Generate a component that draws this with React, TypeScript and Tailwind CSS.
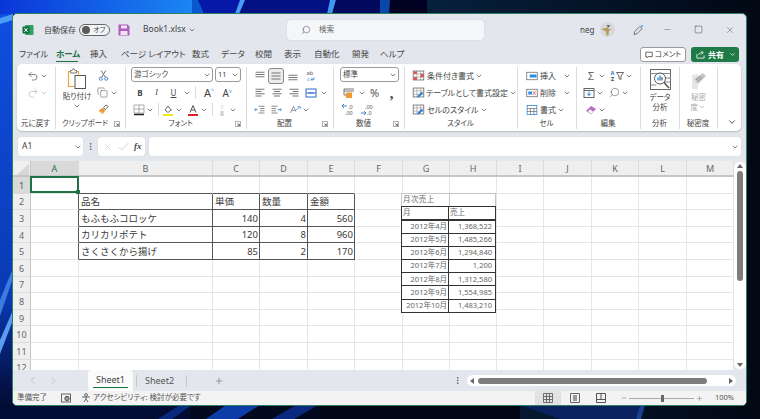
import type { ReactNode } from 'react';
import { ChevronDown, ChevronLeft, ChevronRight, Copy, Minus, MoreVertical, Plus, Redo2, Search, Square, Undo2, X } from 'lucide-react';

function S({ w = 12, h = 12, vb = '0 0 16 16', children }: { w?: number; h?: number; vb?: string; children: ReactNode }) {
  return (
    <svg width={w} height={h} viewBox={vb} fill="none" className="shrink-0">
      {children}
    </svg>
  );
}

function Chev({ grey = false }: { grey?: boolean }) {
  return (
    <span className={`flex w-[10px] shrink-0 justify-center ${grey ? 'text-[#b5b5b5]' : 'text-[#555]'}`}>
      <ChevronDown size={8} strokeWidth={2.2} />
    </span>
  );
}

// horizontal lines icon, used by the alignment buttons
function Lines({ rows, color = '#666' }: { rows: number[][]; color?: string }) {
  return (
    <S>
      {rows.map(([x1, x2, y]) => (
        <path key={`${x1}-${y}`} d={`M${x1} ${y}H${x2}`} stroke={color} strokeWidth="1.2" />
      ))}
    </S>
  );
}

function GridIcon({ children }: { children?: ReactNode }) {
  return (
    <S w={13} h={13}>
      <rect x="1.5" y="2.5" width="13" height="11" fill="#fff" stroke="#666" />
      <path d="M1.5 6h13M1.5 10h13M6 2.5v11M10.5 2.5v11" stroke="#999" strokeWidth=".8" />
      {children}
    </S>
  );
}

function Launcher() {
  return (
    <span className="w-[10px] shrink-0">
      <S w={6} h={6} vb="0 0 8 8">
        <path d="M.5 7.5V.5h7v7z" stroke="#888" />
        <path d="M3 3l3 3M6 3.5V6H3.5" stroke="#555" />
      </S>
    </span>
  );
}

function Group({ width, label, launcher = false, last = false, children }: { width: string; label: string; launcher?: boolean; last?: boolean; children: ReactNode }) {
  return (
    <div className={`flex h-[62px] shrink-0 flex-col ${last ? '' : 'border-r border-[#dcdcdc]'} ${width}`}>
      <div className="h-[52px]">{children}</div>
      <div className="flex h-[10px] items-center pr-[1px]">
        <span className="flex-1 whitespace-nowrap text-center text-[7.5px] leading-none text-[#444]">{label}</span>
        {launcher && <Launcher />}
      </div>
    </div>
  );
}

function Row({ className = '', children }: { className?: string; children: ReactNode }) {
  return <div className={`flex h-[17px] items-center ${className}`}>{children}</div>;
}

function Select({ width, label }: { width: string; label: string }) {
  return (
    <div className={`flex h-[15px] items-center justify-between rounded-[3px] border border-[#9a9a9a] bg-white pl-[2px] text-[7.5px] text-[#444] ${width}`}>
      {label}
      <Chev />
    </div>
  );
}

function Divider() {
  return <span className="mx-[3px] h-[13px] w-px shrink-0 bg-[#dcdcdc]" />;
}

const tabs = [
  { label: 'ファイル', cls: 'w-[37px]' },
  { label: 'ホーム', cls: 'w-[34px]' },
  { label: '挿入', cls: 'w-[31px]' },
  { label: 'ページ レイアウト', cls: 'w-[71px]' },
  { label: '数式', cls: 'w-[29px]' },
  { label: 'データ', cls: 'w-[34px]' },
  { label: '校閲', cls: 'w-[29px]' },
  { label: '表示', cls: 'w-[30px]' },
  { label: '自動化', cls: 'w-[38px]' },
  { label: '開発', cls: 'w-[28px]' },
  { label: 'ヘルプ', cls: 'w-[30px]' },
];

const colNames = ['A', 'B', 'C', 'D', 'E', 'F', 'G', 'H', 'I', 'J', 'K', 'L', 'M'];

const cells: Record<string, string> = {
  B2: '品名', C2: '単価', D2: '数量', E2: '金額',
  B3: 'もふもふコロッケ', C3: '140', D3: '4', E3: '560',
  B4: 'カリカリポテト', C4: '120', D4: '8', E4: '960',
  B5: 'さくさくから揚げ', C5: '85', D5: '2', E5: '170',
};

const monthly = [
  ['2012年4月', '1,368,522'],
  ['2012年5月', '1,485,266'],
  ['2012年6月', '1,294,840'],
  ['2012年7月', '1,200'],
  ['2012年8月', '1,312,580'],
  ['2012年9月', '1,554,985'],
  ['2012年10月', '1,483,210'],
];

const sheetGrid = 'grid grid-cols-[18px_48px_134px_47px_48px_47px_48px_47px_47px_47px_48px_47px_48px_47px]';

function Cell({ col, row }: { col: string; row: number }) {
  const value = cells[`${col}${row}`];
  const inTable = row >= 2 && row <= 5;
  const darkRight = inTable && ['A', 'B', 'C', 'D', 'E'].includes(col);
  const darkBottom = row <= 5 && ['B', 'C', 'D', 'E'].includes(col);
  const numeric = value !== undefined && /^\d+$/.test(value);
  return (
    <div
      className={`relative flex items-center overflow-visible whitespace-nowrap border-b border-r pt-[1px] text-[9.5px] leading-none text-[#3a3a3a] [font-feature-settings:normal] ${
        darkRight ? 'border-r-[#555]' : 'border-r-[#e6e6e6]'
      } ${darkBottom ? 'border-b-[#555]' : 'border-b-[#e6e6e6]'} ${numeric ? 'justify-end pr-[1px]' : 'pl-[2px]'}`}
    >
      {value}
      {col === 'A' && row === 1 && (
        <span className="absolute -left-px -top-px h-[17px] w-[49px] border-2 border-[#1f7246]">
          <span className="absolute -bottom-[3px] -right-[3px] h-[4px] w-[4px] bg-[#1f7246]" />
        </span>
      )}
    </div>
  );
}

function Wallpaper() {
  return (
    <svg className="absolute inset-0" width="760" height="419" viewBox="0 0 760 419">
      <defs>
        <linearGradient id="top" x1="0" x2="1" y1="0" y2="0">
          <stop offset="0" stopColor="#0a36d8" />
          <stop offset="1" stopColor="#1b86f2" />
        </linearGradient>
        <linearGradient id="right" x1="0" x2="1" y1="0" y2="0">
          <stop offset="0" stopColor="#06203c" />
          <stop offset="1" stopColor="#020814" />
        </linearGradient>
        <linearGradient id="side" x1="0" x2="0" y1="0" y2="1">
          <stop offset="0" stopColor="#0f4fe0" />
          <stop offset=".7" stopColor="#0a3ab4" />
          <stop offset=".9" stopColor="#041450" />
          <stop offset="1" stopColor="#020a28" />
        </linearGradient>
      </defs>
      <rect width="760" height="419" fill="#030a20" />
      <rect x="427" width="333" height="419" fill="url(#right)" />
      <rect width="192" height="14" fill="url(#top)" />
      <path d="M192 0h8l4 14h-12z" fill="#0a58d0" />
      <path d="M198 0h44l-5 14h-33z" fill="#0518a8" />
      <path d="M242 0h90l-4 14h-90z" fill="#021182" />
      <path d="M240 0h5l-6 14h-4z" fill="#4a9cf4" />
      <path d="M330 0h6l-4 14h-5z" fill="#3f96f0" />
      <path d="M336 0h46l-1 14h-48z" fill="#00095c" />
      <path d="M380 0h10l-1 14h-9z" fill="#0b46aa" />
      <path d="M390 0h37v14h-37z" fill="#000020" />
      <rect y="14" width="13" height="405" fill="url(#side)" />
      <path d="M0 18L13 14v6L0 24z" fill="#4a9cf4" />
      <path d="M0 300L13 268v10L0 316z" fill="#3a7ce0" />
      <path d="M0 340L13 310v10L0 354z" fill="#5a9cf0" />
      <path d="M0 405h190v14H0z" fill="#020c34" />
      <path d="M180 405h12l-20 14h-14z" fill="#0a2a80" />
      <path d="M226 405h34l-22 14h-32z" fill="#0c3ca8" />
      <path d="M296 405h22l-24 14h-22z" fill="#0a2a80" />
      <path d="M320 405h200v14H320z" fill="#010514" />
      <path d="M520 405h120l-4 14H560z" fill="#0a2360" />
      <path d="M640 405h5l-4 14h-5z" fill="#18408c" />
    </svg>
  );
}

export default function App() {
  return (
    <div className="relative h-[419px] w-[760px] overflow-hidden font-['Noto_Sans','Noto_Sans_CJK_JP',sans-serif] text-[#444] [font-feature-settings:'palt']">
      <Wallpaper />
      <div className="absolute left-[12px] top-[13px] flex h-[393px] w-[735px] flex-col overflow-hidden rounded-[5px] border border-[#2c7f60] bg-[#e3e6ec]">
        {/* title bar */}
        <div className="flex h-[31px] shrink-0 items-center text-[8px]">
          <span className="ml-[9px]">
            <S vb="0 0 12 12">
              <rect x="3" y="1" width="8.5" height="10" rx="1" fill="#33a060" />
              <rect x=".5" y="2.5" width="7" height="7" rx=".8" fill="#107040" />
              <path d="M2.4 4.2l3.2 3.6M5.6 4.2L2.4 7.8" stroke="#fff" strokeWidth="1" />
            </S>
          </span>
          <span className="ml-[10px] w-[32px] whitespace-nowrap">自動保存</span>
          <span className="ml-[3px] flex h-[12px] w-[31px] items-center rounded-full border border-[#666] bg-[#f3f4f7] pl-[2px]">
            <span className="h-[8px] w-[8px] rounded-full bg-[#5a5a5a]" />
            <span className="ml-[3px] text-[7px] leading-none">オフ</span>
          </span>
          <span className="ml-[8px]">
            <S vb="0 0 12 12">
              <path d="M.5.5h9l2 2v9H.5z" fill="#b25cbd" />
              <rect x="3" y="1.5" width="6" height="3" fill="#efe3f2" />
              <rect x="2.5" y="7" width="7" height="4" fill="#efe3f2" />
            </S>
          </span>
          <span className="ml-[13px] w-[42px] whitespace-nowrap text-[8.5px]">Book1.xlsx</span>
          <span className="ml-[2px]">
            <Chev />
          </span>
          <div className="ml-[90px] flex h-[20px] w-[197px] items-center rounded-[3px] bg-[#f5f6f9] pl-[14px] shadow-[0_0_1px_#aaa]">
            <Search size={10} strokeWidth={1.3} className="-scale-x-100 text-[#555]" />
            <span className="ml-[8px] text-[7.5px] text-[#666]">検索</span>
          </div>
          <span className="ml-[96px] w-[14px] text-[8px]">neg</span>
          <span className="ml-[6px]">
            <S w={15} h={15} vb="0 0 15 15">
              <circle cx="7.5" cy="7.5" r="7.5" fill="#d8d9dc" />
              <path d="M1 7l5-1 2-1 1 2 3 .5-3 1-.5 5h-2l-.5-4z" fill="#b59a5c" />
              <path d="M6 3.5h4.5l-2 1.500z" fill="#2a2a2a" />
            </S>
          </span>
          <span className="ml-[17px]">
            <S vb="0 0 12 12">
              <path d="M2 10.500l.8-3 5-5 2.300 2.200-5 5z" stroke="#666" strokeWidth=".9" />
              <path d="M10 1v2M9 2h2" stroke="#3a8fd8" strokeWidth=".8" />
            </S>
          </span>
          <span className="ml-[19px]">
            <Minus size={9} strokeWidth={1} className="text-[#333]" />
          </span>
          <span className="ml-[22px]">
            <Square size={9} strokeWidth={1.2} className="text-[#333]" />
          </span>
          <span className="ml-[22px]">
            <X size={10} strokeWidth={1} className="text-[#333]" />
          </span>
        </div>

        {/* tabs */}
        <div className="flex h-[19px] shrink-0 items-center pl-[6px] pr-[7px] text-[8.5px] text-[#444]">
          {tabs.map((t) => (
            <span key={t.label} className={`relative flex h-[19px] items-center whitespace-nowrap ${t.cls} ${t.label === 'ホーム' ? 'font-bold text-[#1e6f45]' : ''}`}>
              {t.label}
              {t.label === 'ホーム' && <span className="absolute bottom-[2px] left-0 h-[1.5px] w-[22px] bg-[#1f7246]" />}
            </span>
          ))}
          <div className="ml-auto flex items-center gap-[5px]">
            <div className="flex h-[15px] w-[46px] items-center justify-center gap-[2px] rounded-[3px] border border-[#9a9a9a] bg-white text-[7.5px]">
              <S w={8} h={8} vb="0 0 10 10">
                <path d="M1 1.500h8v5.500H4L2.500 8.500V7H1z" stroke="#444" />
              </S>
              コメント
            </div>
            <div className="flex h-[15px] w-[48px] items-center rounded-[3px] bg-[#1e7b45] pl-[5px] text-[8px] text-white">
              <S w={9} h={9} vb="0 0 10 10">
                <path d="M1 4.500V9h8V6M3 5.500C3.500 3.500 5 3 7.500 3M6 1l2 2-2 2" stroke="#fff" strokeWidth=".9" />
              </S>
              <span className="ml-[3px] font-bold">共有</span>
              <span className="ml-[5px] text-white">
                <ChevronDown size={7} strokeWidth={2.5} />
              </span>
            </div>
          </div>
        </div>

        {/* ribbon */}
        <div className="ml-[4px] flex h-[67px] w-[724px] shrink-0 items-start rounded-[5px] bg-white pt-[3px] shadow-[0_1px_2px_#bbb]">
          <Group width="w-[39px]" label="元に戻す">
            <Row className="pl-[10px]">
              <Undo2 size={12} strokeWidth={1.4} className="text-[#555]" />
              <Chev />
            </Row>
            <Row className="pl-[10px]">
              <Redo2 size={12} strokeWidth={1.4} className="text-[#bbb]" />
              <Chev grey />
            </Row>
          </Group>

          <Group width="w-[70px]" label="クリップボード" launcher>
            <div className="flex">
              <div className="flex w-[40px] flex-col items-center pl-[2px] pt-[1px]">
                <S w={21} h={21} vb="0 0 21 21">
                  <path d="M3 3.500H1.500v15h6M10 3.500h1.500v3" stroke="#e8a33d" strokeWidth="1.200" />
                  <path d="M3.500 4V2.500H5L6 .8h1L8 2.500h1.500V5h-6z" stroke="#777" fill="#fff" />
                  <rect x="8" y="7.500" width="10.500" height="13" fill="#fff" stroke="#555" />
                </S>
                <span className="mt-[2px] whitespace-nowrap text-[7.5px] leading-[11px]">貼り付け</span>
                <Chev />
              </div>
              <div className="w-[29px] pl-[1px]">
                <Row className="pl-[1px]">
                  <S w={11} h={11} vb="0 0 12 12">
                    <path d="M3.500.5L8 8M8.500.5L4 8" stroke="#666" />
                    <circle cx="3" cy="9.500" r="1.700" stroke="#3a78c4" />
                    <circle cx="9" cy="9.500" r="1.700" stroke="#3a78c4" />
                  </S>
                </Row>
                <Row>
                  <Copy size={11} strokeWidth={1.2} className="text-[#555]" />
                  <span className="ml-[1px]">
                    <Chev />
                  </span>
                </Row>
                <Row className="pl-[1px]">
                  <S w={11} h={11} vb="0 0 12 12">
                    <path d="M1 7l4-3 3 3-3 4-1-.5L5 8l-2 2-.5-.5L3.500 8 2 9z" fill="#ee9a30" />
                    <path d="M6 4l3-3 2 2-3 3z" stroke="#555" fill="#fff" />
                  </S>
                </Row>
              </div>
            </div>
          </Group>

          <Group width="w-[121px]" label="フォント" launcher>
            <div className="flex h-[17px] items-start pl-[5px]">
              <Select width="w-[82px]" label="游ゴシック" />
              <span className="ml-[2px]">
                <Select width="w-[26px]" label="11" />
              </span>
            </div>
            <Row className="pl-[6px] text-[8px] leading-none">
              <span className="w-[16px] text-center font-bold">B</span>
              <span className="w-[17px] text-center font-['Liberation_Serif',serif] italic">I</span>
              <span className="w-[17px] text-center underline">U</span>
              <Chev />
              <Divider />
              <span className="ml-[1px] w-[18px] text-center text-[11px]">
                A<span className="align-super text-[5px] text-[#3a8fd8]">^</span>
              </span>
              <span className="w-[18px] text-center text-[10px]">
                A<span className="align-super text-[5px] text-[#3a8fd8]">v</span>
              </span>
            </Row>
            <Row className="pl-[7px]">
              <S vb="0 0 12 12">
                <path d="M1 1h10v8H1zM6 1v8M1 5h10" stroke="#999" strokeWidth=".8" />
                <path d="M1 10.500h10" stroke="#222" strokeWidth="1.400" />
              </S>
              <Chev />
              <Divider />
              <S vb="0 0 12 12">
                <path d="M3 6l3-4 3 4-3 2.500z" stroke="#666" />
                <path d="M9 5v2" stroke="#3a8fd8" />
                <path d="M1 11h10" stroke="#f5e616" strokeWidth="2" />
              </S>
              <Chev />
              <span className="ml-[3px]" />
              <S vb="0 0 12 12">
                <path d="M3 8.500L6 1.500l3 7M4 6h4" stroke="#555" />
                <path d="M1 11h10" stroke="#e0202c" strokeWidth="2" />
              </S>
              <Chev />
              <Divider />
              <S w={12} h={12} vb="0 0 12 12">
                <text x="6" y="5" fontSize="5" textAnchor="middle" fill="#aaa">ｱ</text>
                <text x="6" y="11" fontSize="5" textAnchor="middle" fill="#aaa">亜</text>
              </S>
              <Chev />
            </Row>
          </Group>

          <Group width="w-[87px]" label="配置" launcher>
            <Row className="pl-[7px]">
              <Lines rows={[[2, 14, 3], [2, 14, 6], [2, 14, 9]]} />
              <span className="ml-[2px] flex h-[16px] w-[16px] items-center justify-center rounded-[3px] border border-[#8a8a8a] bg-[#ececec]">
                <Lines rows={[[2, 14, 4], [2, 14, 8], [2, 14, 12]]} />
              </span>
              <span className="ml-[3px]">
                <Lines rows={[[2, 14, 7], [2, 14, 10], [2, 14, 13]]} />
              </span>
              <span className="ml-[5px]">
                <S w={12} h={12} vb="0 0 12 12">
                  <text x="6" y="5" fontSize="6" textAnchor="middle" fill="#666">ab</text>
                  <text x="3" y="11" fontSize="6" fill="#3a8fd8">c</text>
                  <path d="M10 7v2.500H7M8.500 8L7 9.500 8.500 11" stroke="#3a8fd8" strokeWidth=".8" />
                </S>
              </span>
            </Row>
            <Row className="pl-[7px]">
              <Lines rows={[[2, 14, 3], [2, 10, 6], [2, 14, 9], [2, 10, 12]]} />
              <span className="ml-[5px]">
                <Lines rows={[[2, 14, 3], [4, 12, 6], [2, 14, 9], [4, 12, 12]]} />
              </span>
              <span className="ml-[5px]">
                <Lines rows={[[2, 14, 3], [6, 14, 6], [2, 14, 9], [6, 14, 12]]} />
              </span>
              <span className="ml-[5px]">
                <S vb="0 0 12 12">
                  <rect x="1" y="2" width="10" height="8" stroke="#2a6fc4" />
                  <path d="M1 6h10M3.500 6h5" stroke="#2a6fc4" />
                </S>
              </span>
              <span className="ml-[2px]">
                <Chev />
              </span>
            </Row>
            <Row className="pl-[7px]">
              <S>
                <path d="M6 3h8M8 6h6M8 9h6M6 12h8" stroke="#666" />
                <path d="M5 7.500H1M3 5.500l-2 2 2 2" stroke="#2a7fd0" />
              </S>
              <span className="ml-[4px]">
                <S>
                  <path d="M2 3h8M2 6h6M2 9h6M2 12h8" stroke="#666" />
                  <path d="M10 7.500h5M13 5.500l2 2-2 2" stroke="#2a7fd0" />
                </S>
              </span>
              <span className="ml-[7px]">
                <S>
                  <path d="M2 12L6 3l3 7M3.500 8.500h4" stroke="#777" />
                  <path d="M8 9l6-5M11.500 3.500H15v3" stroke="#3a8fd8" />
                </S>
              </span>
              <Chev />
            </Row>
          </Group>

          <Group width="w-[71px]" label="数値" launcher>
            <div className="flex h-[17px] items-start pl-[6px]">
              <Select width="w-[59px]" label="標準" />
            </div>
            <Row className="pl-[9px]">
              <S vb="0 0 12 12">
                <path d="M1 2h10M1 4h10" stroke="#777" />
                <rect x="3" y="5.500" width="6" height="5.500" fill="#ee9a30" />
                <path d="M1 2v6h2" stroke="#777" />
              </S>
              <span className="ml-[2px]">
                <Chev />
              </span>
              <span className="w-[15px] text-center text-[11px] leading-none text-[#555]">%</span>
              <span className="ml-[3px] w-[13px] text-center font-['Liberation_Serif',serif] text-[15px] font-bold leading-[10px] text-[#444]">,</span>
            </Row>
            <Row className="pl-[7px]">
              <S w={14} h={13} vb="0 0 14 13">
                <path d="M6 3H1M3 1L1 3l2 2" stroke="#2a7fd0" strokeWidth=".9" />
                <text x="7" y="5.500" fontSize="5.500" fill="#555">.0</text>
                <text x="4" y="12" fontSize="5.500" fill="#555">.00</text>
              </S>
              <span className="ml-[5px]">
                <S w={14} h={13} vb="0 0 14 13">
                  <text x="5" y="5.500" fontSize="5.500" fill="#555">.00</text>
                  <path d="M1 10h5M4 8l2 2-2 2" stroke="#2a7fd0" strokeWidth=".9" />
                  <text x="7" y="12" fontSize="5.500" fill="#555">.0</text>
                </S>
              </span>
            </Row>
          </Group>

          <Group width="w-[113px]" label="スタイル">
            <Row className="whitespace-nowrap pl-[7px] text-[8px]">
              <GridIcon>
                <rect x="2" y="3" width="4" height="3" fill="#e05050" />
                <rect x="10.500" y="6" width="4" height="4" fill="#e05050" />
                <rect x="2" y="10" width="4" height="3.500" fill="#e05050" />
              </GridIcon>
              <span className="ml-[2px]">条件付き書式</span>
              <Chev />
            </Row>
            <Row className="whitespace-nowrap pl-[7px] text-[8px]">
              <GridIcon>
                <path d="M6 13l6-6 2 2-6 5z" fill="#2a7fd0" />
              </GridIcon>
              <span className="ml-[1px]">テーブルとして書式設定</span>
              <Chev />
            </Row>
            <Row className="whitespace-nowrap pl-[7px] text-[8px]">
              <GridIcon>
                <path d="M6 13l6-6 2 2-6 5z" fill="#2a7fd0" />
              </GridIcon>
              <span className="ml-[2px]">セルのスタイル</span>
              <Chev />
            </Row>
          </Group>

          <Group width="w-[59px]" label="セル">
            <Row className="pl-[8px] text-[8px]">
              <S w={12} h={12}>
                <rect x="1" y="3" width="14" height="10" stroke="#666" />
                <rect x="5" y="6" width="9" height="4" fill="#2a8fe0" />
              </S>
              <span className="ml-[2px] w-[22px]">挿入</span>
              <Chev />
            </Row>
            <Row className="pl-[8px] text-[8px]">
              <S w={12} h={12}>
                <rect x="1" y="3" width="14" height="10" stroke="#666" />
                <rect x="3" y="6" width="5" height="4" fill="#2a8fe0" />
                <path d="M9 5.500l4 5M13 5.500l-4 5" stroke="#e04040" />
              </S>
              <span className="ml-[2px] w-[22px]">削除</span>
              <Chev />
            </Row>
            <Row className="pl-[8px] text-[8px]">
              <S w={12} h={12}>
                <rect x="1.500" y="2" width="13" height="12" stroke="#2a7fd0" />
                <path d="M1.500 6h13M1.500 10h13M6 6v8M10.500 6v8" stroke="#555" strokeWidth=".8" />
              </S>
              <span className="ml-[2px]">書式</span>
              <Chev />
            </Row>
          </Group>

          <Group width="w-[64px]" label="編集">
            <Row className="pl-[9px]">
              <span className="w-[10px] text-center text-[11px] leading-none text-[#666]">Σ</span>
              <span className="ml-[1px]">
                <Chev />
              </span>
              <span className="ml-[2px]">
                <S w={7} h={12} vb="0 0 7 12">
                  <text x="3.500" y="5" fontSize="5.500" fontWeight="700" textAnchor="middle" fill="#2a7fd0">A</text>
                  <text x="3.500" y="11" fontSize="5.500" fontWeight="700" textAnchor="middle" fill="#444">Z</text>
                </S>
              </span>
              <S w={8} h={10} vb="0 0 8 10">
                <path d="M.5 1.500h7L5 5v3.500L3 7.500V5z" stroke="#666" />
              </S>
              <Chev />
            </Row>
            <Row className="pl-[6px]">
              <S vb="0 0 12 12">
                <rect x="1" y="1.500" width="10" height="9" stroke="#666" />
                <path d="M1 3.500h10" stroke="#666" />
                <path d="M6 4.500v4M4 6.500l2 2 2-2" stroke="#2a7fd0" />
              </S>
              <Chev />
              <span className="ml-[4px]">
                <Search size={11} strokeWidth={1.2} className="-scale-x-100 text-[#555]" />
              </span>
              <Chev />
            </Row>
            <Row className="pl-[8px]">
              <S vb="0 0 12 12">
                <path d="M1 7l5-5 5 3-5 5z" fill="#b86cc4" />
                <path d="M3 7.500l2-2 3 2-2 2z" fill="#fff" />
              </S>
              <Chev />
            </Row>
          </Group>

          <Group width="w-[39px]" label="分析">
            <div className="flex flex-col items-center pt-[2px]">
              <S w={21} h={21} vb="0 0 21 21">
                <rect x=".5" y=".5" width="20" height="20" fill="#fff" stroke="#666" />
                <path d="M.5 4.500h20M.5 16h6M14 9h6.500M14 13h6.500" stroke="#888" />
                <circle cx="10" cy="9.500" r="5.500" stroke="#555" fill="#fff" />
                <path d="M14 13.500l5 5.500" stroke="#555" strokeWidth="1.500" />
                <path d="M8 8.500v3M10 6.500v5" stroke="#2a8fe0" strokeWidth="1.400" />
                <path d="M12 8v3.500" stroke="#555" strokeWidth="1.200" />
              </S>
              <span className="mt-[2px] whitespace-nowrap text-[7.5px] leading-[10px]">データ</span>
              <span className="whitespace-nowrap text-[7.5px] leading-[10px]">分析</span>
            </div>
          </Group>

          <Group width="w-[38px]" label="秘密度">
            <div className="flex flex-col items-center pt-[3px] text-[#aaa]">
              <S w={20} h={20} vb="0 0 20 20">
                <path d="M3 5l6-1v15H3z" fill="#e6e6e6" />
                <path d="M5 9l9-6 3 3-8 8z" fill="#c8c8c8" />
                <path d="M7 10l5-4M8.500 11.500l5-4" stroke="#8a8a8a" />
              </S>
              <span className="mt-[2px] whitespace-nowrap text-[7.5px] leading-[10px]">秘密</span>
              <span className="flex items-center whitespace-nowrap text-[7.5px] leading-[10px]">
                度
                <span className="-ml-[1px]">
                  <Chev grey />
                </span>
              </span>
            </div>
          </Group>

          <div className="flex h-[60px] flex-1 items-end justify-end pr-[4px]">
            <ChevronDown size={10} strokeWidth={2} className="text-[#333]" />
          </div>
        </div>

        {/* formula bar */}
        <div className="mt-[6px] flex h-[19px] shrink-0 items-center">
          <div className="ml-[5px] flex h-[19px] w-[65px] items-center justify-between rounded-[3px] bg-white pl-[4px] text-[8.5px] shadow-[0_0_1px_#bbb]">
            A1
            <Chev />
          </div>
          <span className="ml-[2px] flex w-[10px] justify-center text-[#555]">
            <MoreVertical size={9} strokeWidth={2} />
          </span>
          <div className="ml-[3px] flex h-[19px] w-[47px] items-center gap-[5px] rounded-[3px] bg-white pl-[4px] shadow-[0_0_1px_#bbb]">
            <X size={11} strokeWidth={1} className="text-[#bbb]" />
            <S w={11} h={11}>
              <path d="M1 9l4 4 10-10" stroke="#bbb" />
            </S>
            <span className="font-['Liberation_Serif',serif] text-[9px] font-bold italic text-[#444]">fx</span>
          </div>
          <div className="ml-[4px] flex h-[19px] w-[592px] items-center justify-end rounded-[3px] bg-white pr-[1px] shadow-[0_0_1px_#bbb]">
            <Chev />
          </div>
        </div>

        {/* sheet */}
        <div className="mt-[5px] flex h-[209px] shrink-0 overflow-hidden">
          <div className="relative w-[721px] shrink-0 overflow-hidden bg-white">
            <div className={`${sheetGrid} h-[16px] border-b-2 border-[#c6c6c6] bg-[#efefef] text-[9px] leading-none text-[#666]`}>
              <div className="border-r border-[#c6c6c6]">
                <div className="ml-auto mr-[1px] mt-[3px] h-[11px] w-[12px] bg-[#d6d6d6] [clip-path:polygon(100%_0,100%_100%,0_100%)]" />
              </div>
              {colNames.map((c) => (
                <div key={c} className={`flex items-center justify-center border-r border-[#dcdcdc] ${c === 'A' ? 'bg-[#d9d9d9] text-[#1f7246]' : ''}`}>
                  {c}
                </div>
              ))}
            </div>
            {[1, 2, 3, 4, 5, 6, 7, 8, 9, 10, 11, 12].map((row) => (
              <div key={row} className={`${sheetGrid} h-[16.6px]`}>
                <div className={`flex items-center justify-center border-b border-r border-b-[#dcdcdc] border-r-[#c6c6c6] pt-[1px] text-[9px] leading-none ${row === 1 ? 'bg-[#d9d9d9] text-[#1f7246]' : 'bg-[#efefef] text-[#666]'}`}>
                  {row}
                </div>
                {colNames.map((c) => (
                  <Cell key={c} col={c} row={row} />
                ))}
              </div>
            ))}

            {/* pasted picture of the monthly table */}
            <div className="absolute left-[388px] top-[32px] w-[95px] bg-white text-[7.5px] leading-none text-[#666] [font-feature-settings:normal]">
              <div className="grid h-[13px] grid-cols-[48px_47px] border-l border-r border-t border-[#c4c4c4]">
                <div className="flex items-center border-r border-[#c4c4c4] pl-[1px] tracking-[0.4px]">月次売上</div>
              </div>
              <div className="border-l border-t border-[#333]">
                <div className="grid h-[13.500px] grid-cols-[47px_47px] border-b-2 border-[#333]">
                  <div className="flex items-center border-r border-[#333] pl-[1px]">月</div>
                  <div className="flex items-center border-r border-[#333] pl-[1px]">売上</div>
                </div>
                {monthly.map(([m, v]) => (
                  <div key={m} className="grid h-[13.200px] grid-cols-[47px_47px] border-b border-[#333]">
                    <div className="flex items-center justify-end whitespace-nowrap border-r border-[#333] pr-[1px]">{m}</div>
                    <div className="flex items-center justify-end border-r border-[#333] pr-[3px]">{v}</div>
                  </div>
                ))}
              </div>
            </div>
          </div>

          {/* vertical scrollbar */}
          <div className="w-[12px] shrink-0 bg-[#e9ebf0] py-[1px]">
            <div className="flex h-[207px] w-[12px] flex-col items-center rounded-full bg-white">
              <span className="mt-[2px] h-0 w-0 border-x-[3px] border-b-[4px] border-x-transparent border-b-[#666]" />
              <span className="mt-[3px] h-[110px] w-[6px] rounded-full bg-[#7d7d7d]" />
              <span className="mb-[2px] mt-auto h-0 w-0 border-x-[3px] border-t-[4px] border-x-transparent border-t-[#666]" />
            </div>
          </div>
        </div>

        {/* sheet tabs */}
        <div className="flex h-[21px] shrink-0 items-center text-[9px]">
          <span className="ml-[14px] text-[#aaa]">
            <ChevronLeft size={11} strokeWidth={1.3} />
          </span>
          <span className="ml-[10px] text-[#aaa]">
            <ChevronRight size={11} strokeWidth={1.3} />
          </span>
          <div className="relative ml-[29px] flex h-[21px] w-[45px] items-center justify-center rounded-t-[4px] bg-[#fbfbfb] pb-[2px]">
            Sheet1
            <span className="absolute bottom-[3px] left-[5px] h-[1.500px] w-[35px] bg-[#1f7246]" />
          </div>
          <span className="ml-[3px] h-[12px] w-px bg-[#c8c8c8]" />
          <span className="ml-[8px] w-[33px] whitespace-nowrap text-[#555]">Sheet2</span>
          <span className="ml-[8px] h-[12px] w-px bg-[#c8c8c8]" />
          <span className="ml-[27px] text-[#555]">
            <Plus size={10} strokeWidth={1.2} />
          </span>
          <span className="ml-[228px] flex w-[10px] justify-center text-[#555]">
            <MoreVertical size={9} strokeWidth={2} />
          </span>
          <div className="ml-[5px] flex h-[11px] w-[269px] items-center rounded-full bg-white px-[3px]">
            <span className="h-0 w-0 border-y-[3px] border-r-[4px] border-y-transparent border-r-[#666]" />
            <span className="ml-[4px] h-[6px] w-[229px] rounded-full bg-[#7d7d7d]" />
            <span className="ml-auto h-0 w-0 border-y-[3px] border-l-[4px] border-y-transparent border-l-[#666]" />
          </div>
        </div>

        {/* status bar */}
        <div className="flex h-[14px] shrink-0 items-center bg-[#f3f3f3] text-[7.5px] text-[#555]">
          <span className="ml-[4px] w-[32px] whitespace-nowrap">準備完了</span>
          <span className="ml-[12px]">
            <S w={10} h={10} vb="0 0 10 10">
              <rect x=".5" y="1" width="9" height="8" stroke="#666" />
              <circle cx="6" cy="5.500" r="2.200" stroke="#555" fill="#999" />
            </S>
          </span>
          <span className="ml-[10px]">
            <S w={10} h={10} vb="0 0 10 10">
              <circle cx="5" cy="2" r="1.400" stroke="#666" />
              <path d="M1 4h8M5 4v2M3 9l2-3 2 3" stroke="#666" />
            </S>
          </span>
          <span className="ml-[2px] whitespace-nowrap">アクセシビリティ: 検討が必要です</span>
          <div className="ml-auto flex h-[14px] items-center pr-[12px]">
            <span className="flex h-[14px] w-[26px] items-center justify-center bg-[#e2e2e2]">
              <S w={10} h={10} vb="0 0 10 10">
                <path d="M.5.5h9v9h-9zM.5 3.500h9M.5 6.500h9M3.500.5v9M6.500.5v9" stroke="#555" strokeWidth=".8" />
              </S>
            </span>
            <span className="flex w-[27px] justify-center">
              <S w={10} h={10} vb="0 0 10 10">
                <path d="M.5.5h9v9h-9z" stroke="#666" />
                <rect x="3" y="2" width="4" height="6" fill="#999" />
              </S>
            </span>
            <span className="flex w-[26px] justify-center">
              <S w={10} h={10} vb="0 0 10 10">
                <path d="M.5.5h9v9h-9zM.5 6.500h9M5 .5v6" stroke="#555" />
              </S>
            </span>
            <span className="ml-[7px] text-[#666]">
              <Minus size={6} strokeWidth={2} />
            </span>
            <span className="relative ml-[2px] flex h-[8px] w-[65px] items-center">
              <span className="h-px w-full bg-[#aaa]" />
              <span className="absolute left-[32px] h-[7px] w-[3px] bg-[#666]" />
            </span>
            <span className="ml-[2px] text-[#666]">
              <Plus size={7} strokeWidth={1.5} />
            </span>
            <span className="ml-[9px] w-[22px] text-right">100%</span>
          </div>
        </div>
      </div>
    </div>
  );
}
